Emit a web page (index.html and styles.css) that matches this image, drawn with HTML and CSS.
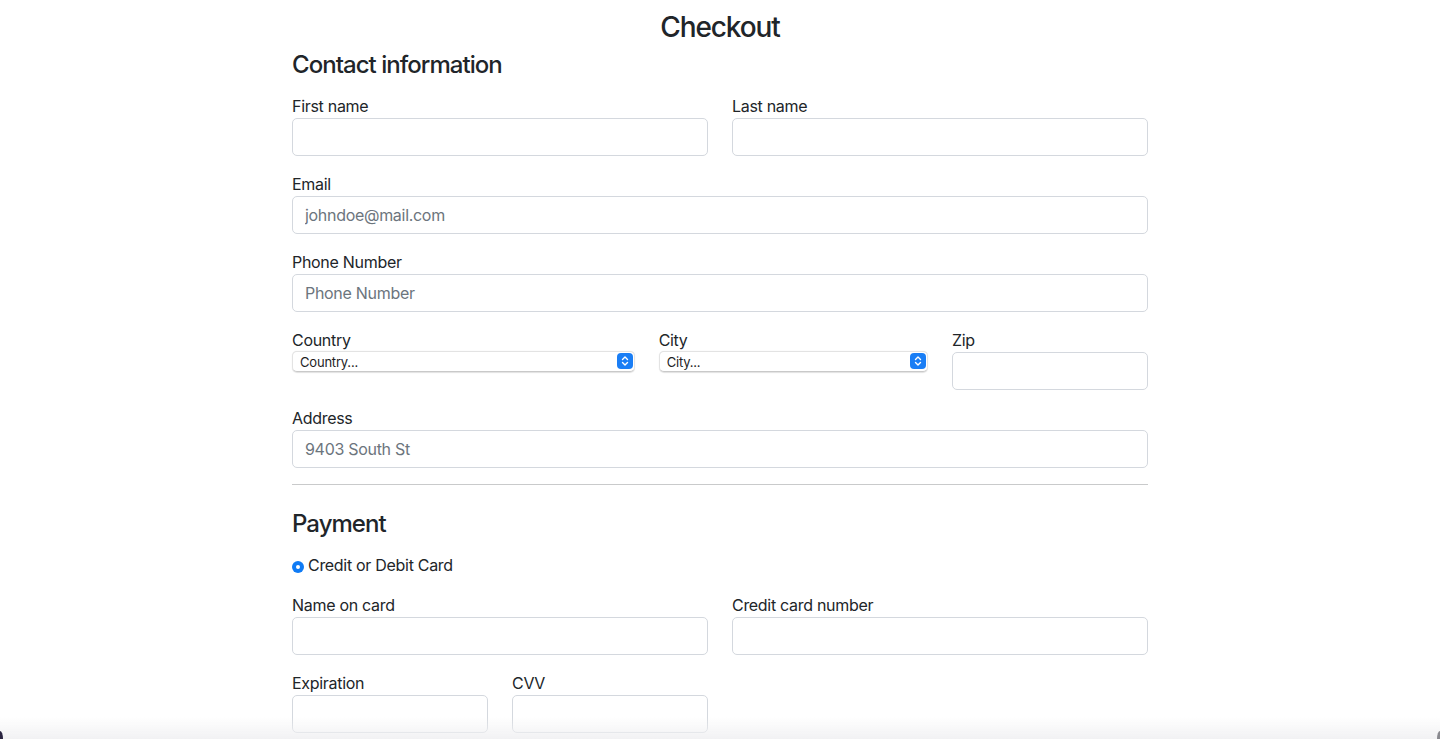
FILE: index.html
```html
<!DOCTYPE html>
<html lang="en">
<head>
<meta charset="utf-8">
<title>Checkout</title>
<link rel="stylesheet" href="styles.css">
</head>
<body>
<main class="page">
  <h3 class="title">Checkout</h3>
  <form class="checkout">
    <h4 class="section-title">Contact information</h4>
    <div class="row">
      <div class="field col-6">
        <label class="label" for="fn">First name</label>
        <input class="input" id="fn" type="text">
      </div>
      <div class="field col-6">
        <label class="label" for="ln">Last name</label>
        <input class="input" id="ln" type="text">
      </div>
    </div>
    <div class="field">
      <label class="label" for="em">Email</label>
      <input class="input" id="em" type="text" placeholder="johndoe@mail.com">
    </div>
    <div class="field">
      <label class="label" for="ph">Phone Number</label>
      <input class="input" id="ph" type="text" placeholder="Phone Number">
    </div>
    <div class="row">
      <div class="field col-5">
        <label class="label" for="co">Country</label>
        <div class="select-wrap">
          <select class="select" id="co"><option>Country...</option></select>
          <span class="stepper"><svg width="16" height="16" viewBox="0 0 16 16"><path d="M5.5 6.5 8 4l2.5 2.5M5.5 9.5 8 12l2.5-2.5" fill="none" stroke="#fff" stroke-width="1.4" stroke-linecap="round" stroke-linejoin="round"/></svg></span>
        </div>
      </div>
      <div class="field col-4">
        <label class="label" for="ci">City</label>
        <div class="select-wrap">
          <select class="select" id="ci"><option>City...</option></select>
          <span class="stepper"><svg width="16" height="16" viewBox="0 0 16 16"><path d="M5.5 6.5 8 4l2.5 2.5M5.5 9.5 8 12l2.5-2.5" fill="none" stroke="#fff" stroke-width="1.4" stroke-linecap="round" stroke-linejoin="round"/></svg></span>
        </div>
      </div>
      <div class="field col-3">
        <label class="label" for="zp">Zip</label>
        <input class="input" id="zp" type="text">
      </div>
    </div>
    <div class="field">
      <label class="label" for="ad">Address</label>
      <input class="input" id="ad" type="text" placeholder="9403 South St">
    </div>
    <hr class="divider">
    <h4 class="section-title payment">Payment</h4>
    <div class="radio-line">
      <span class="radio"></span>
      <span class="radio-text">Credit or Debit Card</span>
    </div>
    <div class="row">
      <div class="field col-6">
        <label class="label" for="nc">Name on card</label>
        <input class="input" id="nc" type="text">
      </div>
      <div class="field col-6">
        <label class="label" for="cc">Credit card number</label>
        <input class="input" id="cc" type="text">
      </div>
    </div>
    <div class="row">
      <div class="field col-3">
        <label class="label" for="ex">Expiration</label>
        <input class="input" id="ex" type="text">
      </div>
      <div class="field col-3">
        <label class="label" for="cv">CVV</label>
        <input class="input" id="cv" type="text">
      </div>
    </div>
  </form>
</main>
<div class="window-edge">
  <span class="corner left"></span>
  <span class="corner right"></span>
</div>
</body>
</html>
```
FILE: styles.css
```css
* { box-sizing: border-box; }
html, body { margin: 0; padding: 0; background: #fff; }
body {
  font-family: Inter, "Noto Sans", "Liberation Sans", sans-serif;
  font-size: 16px;
  line-height: 1.5;
  letter-spacing: -0.3px;
  color: #212529;
  overflow: hidden;
  height: 739px;
}
.page {
  width: 856px;
  margin: 0 auto;
  padding-top: 11px;
}
.title {
  margin: 0 0 6px;
  font-size: 28px;
  font-weight: 500;
  line-height: 1.2;
  letter-spacing: -0.04em;
  text-align: center;
}
.section-title {
  margin: 0 0 15px;
  font-size: 24px;
  font-weight: 500;
  line-height: 1.2;
  letter-spacing: -0.04em;
}
.section-title.payment { margin-bottom: 14px; }
.row {
  display: grid;
  grid-template-columns: repeat(12, 1fr);
  column-gap: 24px;
}
.col-6 { grid-column: span 6; }
.col-5 { grid-column: span 5; }
.col-4 { grid-column: span 4; }
.col-3 { grid-column: span 3; }
.field { margin-bottom: 16px; }
.label { display: block; line-height: 24px; }
.input {
  display: block;
  width: 100%;
  height: 38px;
  padding: 6px 12px;
  font: inherit;
  letter-spacing: -0.3px;
  color: #212529;
  background: #fff;
  border: 1px solid #d4d8de;
  border-radius: 5px;
  outline: none;
}
.input::placeholder { color: #6c757d; opacity: 1; }
.select-wrap {
  position: relative;
  height: 21px;
  margin-top: -1px;
}
.select {
  -webkit-appearance: none;
  appearance: none;
  display: block;
  width: 100%;
  height: 21px;
  padding: 0 24px 0 7px;
  font-family: Inter, "Noto Sans", "Liberation Sans", sans-serif;
  font-size: 13px;
  letter-spacing: -0.2px;
  color: #1d1d1f;
  background: #fff;
  border: 1px solid #e3e3e3;
  border-bottom-color: #c9c9c9;
  border-radius: 5px;
  box-shadow: 0 0.5px 1px rgba(0,0,0,0.12);
  outline: none;
}
.stepper {
  position: absolute;
  right: 2px;
  top: 2px;
  width: 16px;
  height: 16px;
  border-radius: 4px;
  background: #1a7ef5;
  display: flex;
}
.divider {
  margin: 0 0 25px;
  border: 0;
  border-top: 1px solid #c9cacb;
}
.radio-line {
  display: flex;
  align-items: center;
  gap: 4px;
  height: 24px;
  margin-bottom: 16px;
}
.radio {
  width: 12px;
  height: 12px;
  margin-top: 4px;
  border-radius: 50%;
  background: #0f7bf5;
  position: relative;
}
.radio::after {
  content: "";
  position: absolute;
  left: 4px;
  top: 4px;
  width: 4px;
  height: 4px;
  border-radius: 50%;
  background: #fff;
}
.window-edge {
  position: fixed;
  left: 0;
  right: 0;
  bottom: 0;
  height: 22px;
  background: linear-gradient(to bottom, rgba(240,240,242,0), rgba(240,240,242,0.9));
  pointer-events: none;
}
.corner {
  position: absolute;
  bottom: 0;
  width: 3px;
  height: 8px;
  background: #2a2440;
}
.corner.left { left: 0; border-top-right-radius: 3px 8px; }
.corner.right { right: 0; border-top-left-radius: 3px 8px; background: #8a8a8f; }
```
